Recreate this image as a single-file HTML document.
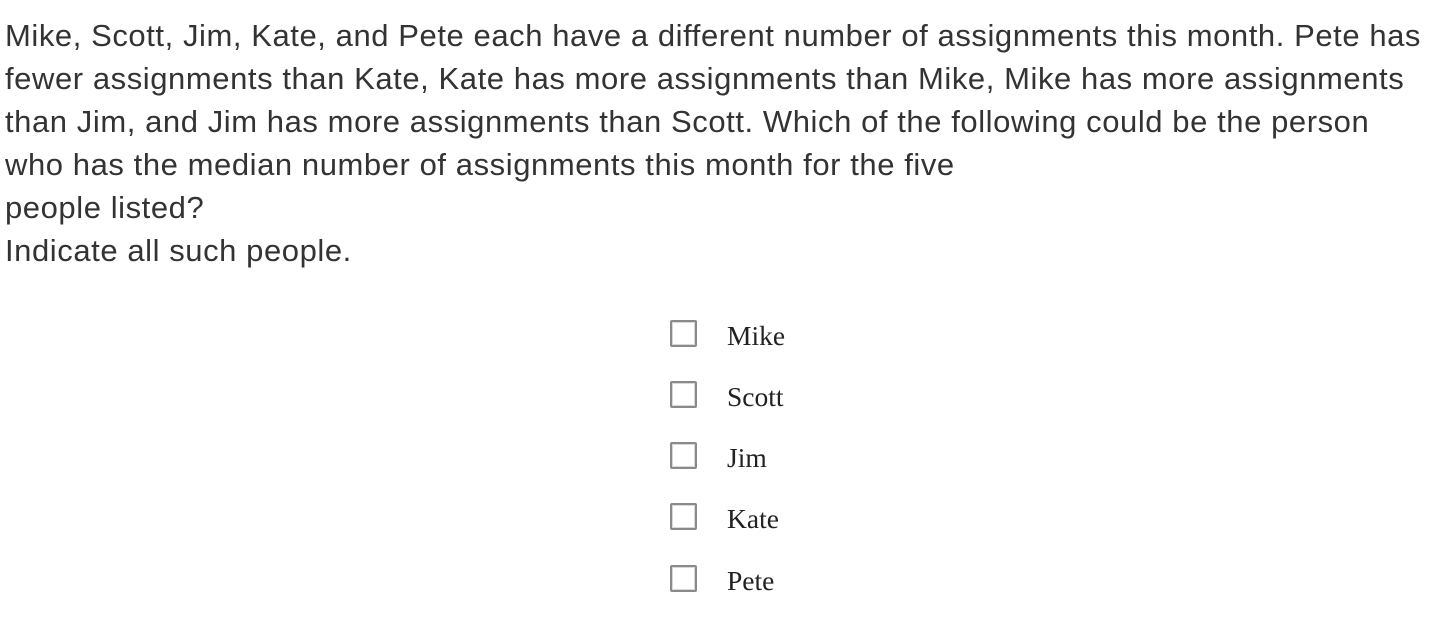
<!DOCTYPE html>
<html><head><meta charset="utf-8"><style>
body{margin:0;background:#fff;width:1452px;height:618px;overflow:hidden}
.q{position:absolute;left:5px;top:14px;font-family:"Liberation Sans",sans-serif;font-size:31px;line-height:43px;color:#333;letter-spacing:0.57px}
.q div{white-space:nowrap}
.opt{position:absolute;left:670px;height:27px}
.box{position:absolute;left:0;top:0;width:23px;height:23px;border:2px solid #8a8a8a;border-radius:2px;background:#fff;box-shadow:inset 0 0 0 1px #d8d8d8}
.lbl{position:absolute;left:57px;top:0px;font-family:"Liberation Serif",serif;font-size:27.5px;color:#222;white-space:nowrap}
</style></head><body>
<div class="q">
<div>Mike, Scott, Jim, Kate, and Pete each have a different number of assignments this month. Pete has</div>
<div>fewer assignments than Kate, Kate has more assignments than Mike, Mike has more assignments</div>
<div>than Jim, and Jim has more assignments than Scott. Which of the following could be the person</div>
<div>who has the median number of assignments this month for the five</div>
<div>people listed?</div>
<div>Indicate all such people.</div>
</div>
<div class="opt" style="top:320px"><div class="box"></div><div class="lbl">Mike</div></div>
<div class="opt" style="top:381px"><div class="box"></div><div class="lbl">Scott</div></div>
<div class="opt" style="top:442px"><div class="box"></div><div class="lbl">Jim</div></div>
<div class="opt" style="top:503px"><div class="box"></div><div class="lbl">Kate</div></div>
<div class="opt" style="top:565px"><div class="box"></div><div class="lbl">Pete</div></div>
</body></html>
